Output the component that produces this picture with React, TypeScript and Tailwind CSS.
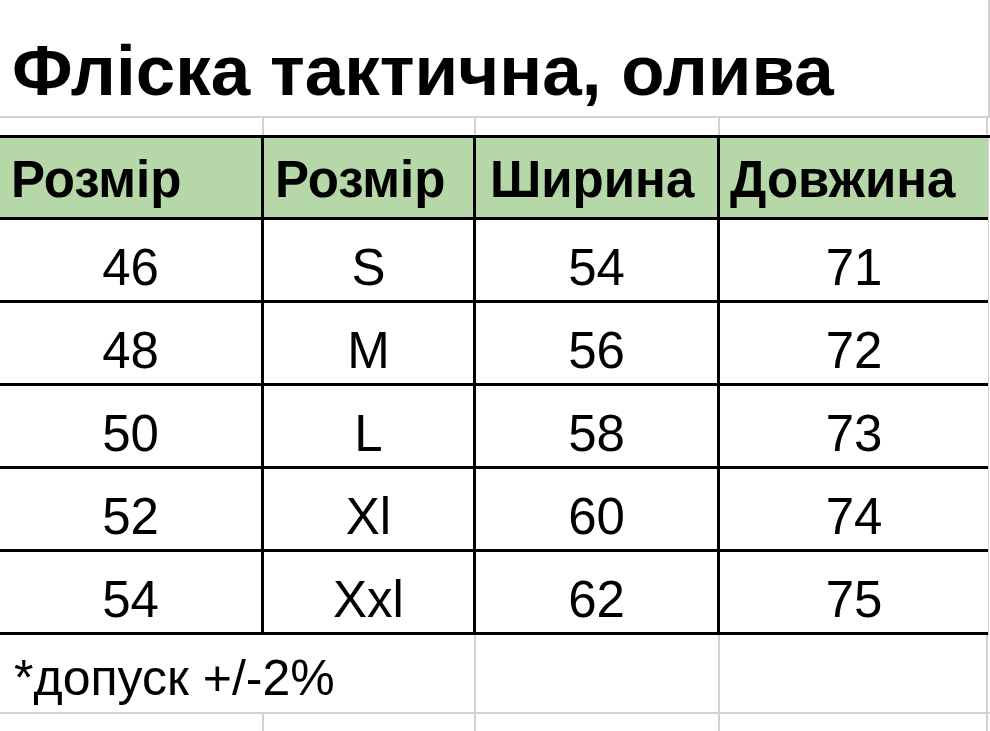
const rows = [
  ["46", "S", "54", "71"],
  ["48", "M", "56", "72"],
  ["50", "L", "58", "73"],
  ["52", "Xl", "60", "74"],
  ["54", "Xxl", "62", "75"],
];

const headers = [
  { label: "Розмір", pad: "pl-[11px]" },
  { label: "Розмір", pad: "pl-[11px]" },
  { label: "Ширина", pad: "pl-[14px]" },
  { label: "Довжина", pad: "pl-[10px]" },
];

const grid = "grid grid-cols-[264px_212px_244px_268px_2px]";

export default function App() {
  return (
    <div className="w-[990px] h-[731px] overflow-hidden bg-white text-black font-['Liberation_Sans',Arial,sans-serif]">
      {/* title row, text runs over the column lines */}
      <div className="flex h-[118px] border-b-2 border-[#d2d2d2]">
        <div className="flex flex-1 items-end pl-[12px] pb-[10px] text-[71px] font-bold leading-none whitespace-nowrap">
          Фліска тактична, олива
        </div>
        <div className="w-[2px] border-l-2 border-[#d2d2d2]" />
      </div>

      {/* empty spacer row */}
      <div className={`${grid} h-[17px]`}>
        <div className="border-r-2 border-[#d2d2d2]" />
        <div className="border-r-2 border-[#d2d2d2]" />
        <div className="border-r-2 border-[#d2d2d2]" />
        <div className="border-r-2 border-[#d2d2d2]" />
        <div />
      </div>

      {/* size table */}
      <div className="border-t-[3px] border-black">
        <div className={`${grid} h-[82px]`}>
          {headers.map((h, i) => (
            <div
              key={i}
              className={`flex items-end bg-[#b6d7a8] border-b-[3px] border-black ${i < 3 ? "border-r-[3px]" : ""} ${h.pad} pb-[12px] text-[51px] font-bold leading-none whitespace-nowrap overflow-hidden`}
            >
              {h.label}
            </div>
          ))}
          <div className="border-l border-[#d2d2d2]" />
        </div>
        {rows.map((r, ri) => (
          <div key={ri} className={`${grid} h-[83px]`}>
            {r.map((v, i) => (
              <div
                key={i}
                className={`flex items-end justify-center border-b-[3px] border-black ${i < 3 ? "border-r-[3px]" : ""} pb-[7px] text-[51px] leading-none`}
              >
                {v}
              </div>
            ))}
            <div className="border-l border-[#d2d2d2]" />
          </div>
        ))}
      </div>

      {/* note row */}
      <div className={`${grid} h-[79px] border-b-2 border-[#d2d2d2]`}>
        <div className="col-span-2 flex items-end pl-[14px] pb-[9px] text-[50px] leading-none whitespace-nowrap border-r-2 border-[#d2d2d2]">
          *допуск +/-2%
        </div>
        <div className="border-r-2 border-[#d2d2d2]" />
        <div className="border-r-2 border-[#d2d2d2]" />
        <div />
      </div>

      <div className={`${grid} h-[20px]`}>
        <div className="border-r-2 border-[#d2d2d2]" />
        <div className="border-r-2 border-[#d2d2d2]" />
        <div className="border-r-2 border-[#d2d2d2]" />
        <div className="border-r-2 border-[#d2d2d2]" />
        <div />
      </div>
    </div>
  );
}
